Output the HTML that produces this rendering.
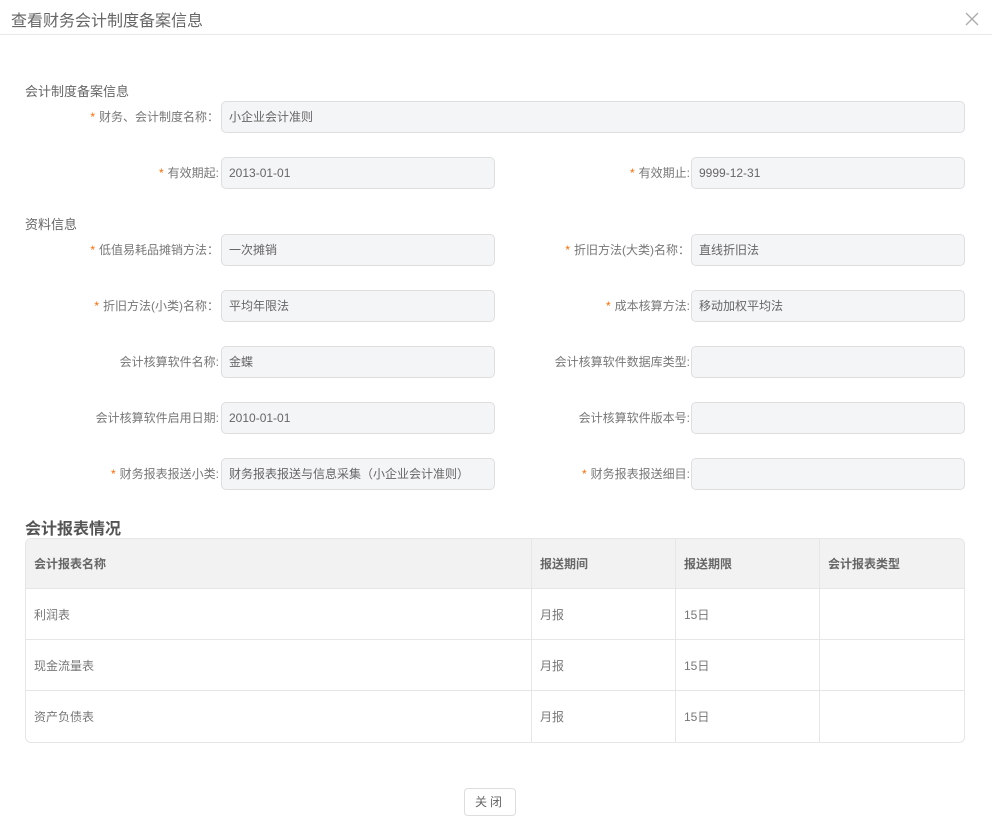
<!DOCTYPE html>
<html><head><meta charset="utf-8"><style>
*{margin:0;padding:0;box-sizing:border-box}
body{width:992px;height:833px;background:#fff;font-family:"Liberation Sans","Noto Sans CJK SC",sans-serif;font-size:12px;color:#666;position:relative;overflow:hidden}
.a{position:absolute}
.hd{left:0;top:0;width:992px;height:35px;border-bottom:1px solid #e8e8e8}
.title{left:11px;top:7px;font-size:16px;color:#666}
.sec{font-size:13px;color:#666}
.lbl{text-align:right;line-height:32px;height:32px;white-space:nowrap;color:#777}
.lbl b{color:#ff6a00;font-weight:normal;margin-right:4px}
.in{height:32px;border:1px solid #dedede;border-radius:5px;background:#f4f5f7;line-height:30px;padding-left:7px;color:#666}
table{border-collapse:separate;border-spacing:0;border:1px solid #e6e6e6;border-radius:6px;width:940px;overflow:hidden}
td,th{height:51px;border-bottom:1px solid #e6e6e6;border-right:1px solid #e6e6e6;text-align:left;padding-left:8px;font-weight:normal;color:#777}
th{background:#f2f2f2;font-weight:bold;color:#666;height:50px}
tr:last-child td{border-bottom:none}
td:last-child,th:last-child{border-right:none}
.btn{left:464px;top:788px;width:52px;height:28px;border:1px solid #ddd;border-radius:4px;text-align:center;line-height:26px;color:#666;letter-spacing:3px}
</style></head><body>
<div class="a hd"></div>
<div class="a title">查看财务会计制度备案信息</div>
<svg class="a" style="left:965px;top:12px" width="14" height="14"><path d="M1 1L13 13M13 1L1 13" stroke="#aaa" stroke-width="1.3"/></svg>

<div class="a sec" style="left:25px;top:81px">会计制度备案信息</div>
<div class="a lbl" style="right:773px;top:101px"><b>*</b>财务、会计制度名称：</div>
<div class="a in" style="left:221px;top:101px;width:744px">小企业会计准则</div>

<div class="a lbl" style="right:773px;top:157px"><b>*</b>有效期起:</div>
<div class="a in" style="left:221px;top:157px;width:274px">2013-01-01</div>
<div class="a lbl" style="right:302px;top:157px"><b>*</b>有效期止:</div>
<div class="a in" style="left:691px;top:157px;width:274px">9999-12-31</div>

<div class="a sec" style="left:25px;top:214px">资料信息</div>
<div class="a lbl" style="right:773px;top:234px"><b>*</b>低值易耗品摊销方法：</div>
<div class="a in" style="left:221px;top:234px;width:274px">一次摊销</div>
<div class="a lbl" style="right:302px;top:234px"><b>*</b>折旧方法(大类)名称：</div>
<div class="a in" style="left:691px;top:234px;width:274px">直线折旧法</div>

<div class="a lbl" style="right:773px;top:290px"><b>*</b>折旧方法(小类)名称：</div>
<div class="a in" style="left:221px;top:290px;width:274px">平均年限法</div>
<div class="a lbl" style="right:302px;top:290px"><b>*</b>成本核算方法:</div>
<div class="a in" style="left:691px;top:290px;width:274px">移动加权平均法</div>

<div class="a lbl" style="right:773px;top:346px">会计核算软件名称:</div>
<div class="a in" style="left:221px;top:346px;width:274px">金蝶</div>
<div class="a lbl" style="right:302px;top:346px">会计核算软件数据库类型:</div>
<div class="a in" style="left:691px;top:346px;width:274px"></div>

<div class="a lbl" style="right:773px;top:402px">会计核算软件启用日期:</div>
<div class="a in" style="left:221px;top:402px;width:274px">2010-01-01</div>
<div class="a lbl" style="right:302px;top:402px">会计核算软件版本号:</div>
<div class="a in" style="left:691px;top:402px;width:274px"></div>

<div class="a lbl" style="right:773px;top:458px"><b>*</b>财务报表报送小类:</div>
<div class="a in" style="left:221px;top:458px;width:274px">财务报表报送与信息采集（小企业会计准则）</div>
<div class="a lbl" style="right:302px;top:458px"><b>*</b>财务报表报送细目:</div>
<div class="a in" style="left:691px;top:458px;width:274px"></div>

<div class="a" style="left:25px;top:515px;font-size:16px;font-weight:bold;color:#555">会计报表情况</div>
<div class="a" style="left:25px;top:538px">
<table>
<tr><th style="width:506px">会计报表名称</th><th style="width:144px">报送期间</th><th style="width:144px">报送期限</th><th>会计报表类型</th></tr>
<tr><td>利润表</td><td>月报</td><td>15日</td><td></td></tr>
<tr><td>现金流量表</td><td>月报</td><td>15日</td><td></td></tr>
<tr><td>资产负债表</td><td>月报</td><td>15日</td><td></td></tr>
</table></div>
<div class="a btn">关闭</div>
</body></html>
